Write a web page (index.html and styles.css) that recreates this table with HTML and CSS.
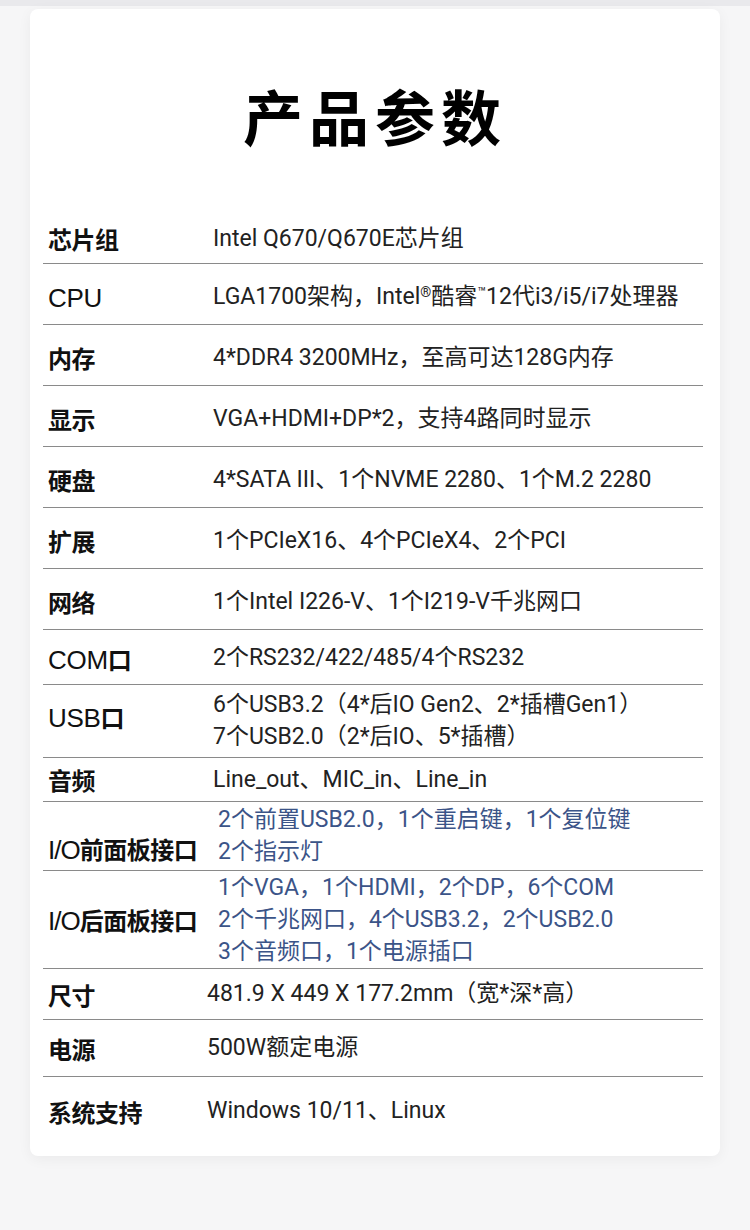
FILE: index.html
```html
<!DOCTYPE html>
<html lang="zh-CN">
<head>
<meta charset="utf-8">
<title>产品参数</title>
<link rel="stylesheet" href="styles.css">
</head>
<body>
<div class="topbar"></div>
<main class="card">
  <h1 class="title">产品参数</h1>
  <div class="specs">
    <div class="row h61 first">
      <div class="label">芯片组</div>
      <div class="value">Intel Q670/Q670E芯片组</div>
    </div>
    <div class="row h61">
      <div class="label"><span class="en">CPU</span></div>
      <div class="value">LGA1700架构，Intel<sup>®</sup>酷睿<sup>™</sup>12代i3/i5/i7处理器</div>
    </div>
    <div class="row h61">
      <div class="label">内存</div>
      <div class="value">4*DDR4 3200MHz，至高可达128G内存</div>
    </div>
    <div class="row h61">
      <div class="label">显示</div>
      <div class="value">VGA+HDMI+DP*2，支持4路同时显示</div>
    </div>
    <div class="row h61">
      <div class="label">硬盘</div>
      <div class="value">4*SATA III、1个NVME 2280、1个M.2 2280</div>
    </div>
    <div class="row h61">
      <div class="label">扩展</div>
      <div class="value">1个PCIeX16、4个PCIeX4、2个PCI</div>
    </div>
    <div class="row h61">
      <div class="label">网络</div>
      <div class="value">1个Intel I226-V、1个I219-V千兆网口</div>
    </div>
    <div class="row h55">
      <div class="label"><span class="en">COM</span>口</div>
      <div class="value">2个RS232/422/485/4个RS232</div>
    </div>
    <div class="row h73">
      <div class="label up"><span class="en">USB</span>口</div>
      <div class="value">6个USB3.2（4*后IO Gen2、2*插槽Gen1）<br>7个USB2.0（2*后IO、5*插槽）</div>
    </div>
    <div class="row h44">
      <div class="label">音频</div>
      <div class="value">Line_out、MIC_in、Line_in</div>
    </div>
    <div class="row h69">
      <div class="label low"><span class="en io">I/O</span>前面板接口</div>
      <div class="value blue">2个前置USB2.0，1个重启键，1个复位键<br>2个指示灯</div>
    </div>
    <div class="row h98">
      <div class="label"><span class="en io">I/O</span>后面板接口</div>
      <div class="value blue">1个VGA，1个HDMI，2个DP，6个COM<br>2个千兆网口，4个USB3.2，2个USB2.0<br>3个音频口，1个电源插口</div>
    </div>
    <div class="row h51">
      <div class="label">尺寸</div>
      <div class="value shift">481.9 X 449 X 177.2mm（宽*深*高）</div>
    </div>
    <div class="row h57">
      <div class="label">电源</div>
      <div class="value shift">500W额定电源</div>
    </div>
    <div class="row h68 last">
      <div class="label">系统支持</div>
      <div class="value shift">Windows 10/11、Linux</div>
    </div>
  </div>
</main>
</body>
</html>
```

FILE: styles.css
```css
* { box-sizing: border-box; }

html, body {
  margin: 0;
  padding: 0;
}

body {
  width: 750px;
  min-height: 1230px;
  background: #f6f6f7;
  font-family: Roboto, "Noto Sans CJK SC", sans-serif;
  color: #222;
}

.topbar {
  height: 6px;
  background: #e9e9ec;
}

.card {
  margin: 3px 30px 0 30px;
  height: 1147px;
  background: #fff;
  border-radius: 8px;
  box-shadow: 0 3px 14px rgba(0, 0, 0, 0.05);
  padding-top: 76px;
}

.title {
  margin: 0;
  height: 118px;
  font-family: "Noto Sans CJK SC", sans-serif;
  font-size: 60px;
  line-height: 60px;
  font-weight: 700;
  letter-spacing: 6px;
  text-align: center;
  color: #000;
}

.specs {
  margin: 0 17px 0 13px;
}

.row {
  display: grid;
  grid-template-columns: 165px 1fr;
  align-items: center;
  padding-left: 5px;
  border-bottom: 1px solid #8a8a8a;
}

.row.last { border-bottom: none; }

.h61 { height: 61px; padding-top: 5px; }
.first { padding-top: 11px; }
.h55 { height: 55px; padding-top: 2px; }
.h73 { height: 73px; }
.h44 { height: 44px; }
.h69 { height: 69px; }
.h98 { height: 98px; }
.h51 { height: 51px; }
.h57 { height: 57px; }
.h68 { height: 68px; }

.label {
  font-family: "Noto Sans CJK SC", sans-serif;
  font-size: 24px;
  font-weight: 700;
  color: #111;
  white-space: nowrap;
  letter-spacing: -0.5px;
}

.label .en {
  font-family: "Liberation Sans", Arial, sans-serif;
  font-size: 26px;
  font-weight: 400;
  letter-spacing: -0.3px;
}

.label .en.io {
  letter-spacing: -1px;
}

.label.low { padding-top: 24px; }
.label.up { margin-top: -10px; }

.value {
  font-size: 23px;
  line-height: 32px;
  color: #222;
  white-space: nowrap;
}

.value sup {
  font-size: 14px;
  vertical-align: 7px;
  line-height: 0;
}

.value.blue {
  color: #3b5488;
  padding-left: 5px;
}

.value.shift {
  margin-left: -6px;
}
```
